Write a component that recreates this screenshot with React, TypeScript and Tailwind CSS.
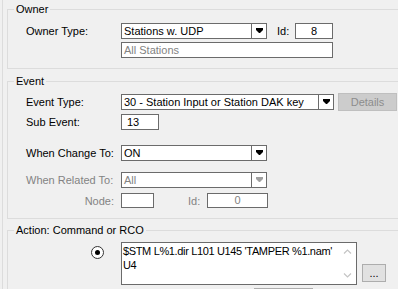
import React from "react";

const Arrow = ({ disabled }: { disabled?: boolean }) => (
  <svg width="7" height="6" viewBox="0 0 7 6">
    <path d="M0 0H7V2L4 5H3L0 2Z" fill={disabled ? "#a0a0a0" : "#000"} />
  </svg>
);

function Select({ value, className, disabled }: { value: string; className: string; disabled?: boolean }) {
  return (
    <div className={"flex h-[16px] border border-[#6b6b6b] bg-white " + className}>
      <div className={"flex-1 pl-[2px] leading-[14px] whitespace-nowrap overflow-hidden " + (disabled ? "text-[#838383]" : "text-black")}>
        {value}
      </div>
      <div className="w-[15px] border-l border-[#6b6b6b] flex items-center justify-center">
        <Arrow disabled={disabled} />
      </div>
    </div>
  );
}

function Group({ title, className, children }: { title: string; className: string; children?: React.ReactNode }) {
  return (
    <div className={"relative w-[420px] border border-r-0 border-[#dcdcdc] " + className}>
      <span className="absolute top-[-7px] left-[6px] bg-[#f0f0f0] px-[2px] leading-[13px]">{title}</span>
      {children}
    </div>
  );
}

const Chevron = ({ up }: { up?: boolean }) => (
  <svg width="9" height="5" viewBox="0 0 9 5">
    <polyline
      points={up ? "1,4.5 4.5,1 8,4.5" : "1,0.5 4.5,4 8,0.5"}
      fill="none"
      stroke="#c4c4c4"
      strokeWidth="1.2"
    />
  </svg>
);

export default function App() {
  return (
    <div
      className="w-[398px] h-[289px] overflow-hidden bg-[#f0f0f0] pl-[2px] text-[11px] text-black"
      style={{ fontFamily: '"Liberation Sans", Arial, sans-serif' }}
    >
      <div className="h-full border-l border-[#dcdcdc] pl-[4px] pt-[9px]">
        {/* Owner */}
        <Group title="Owner" className="h-[60px] pt-[13px]">
          <div className="flex flex-col gap-[3px]">
            <div className="flex items-center h-[16px]">
              <div className="w-[113px] pl-[18px] leading-[14px]">Owner Type:</div>
              <Select value="Stations w. UDP" className="w-[146px]" />
              <div className="ml-[10px] w-[18px] leading-[14px]">Id:</div>
              <div className="w-[38px] h-[16px] border border-[#6b6b6b] bg-white text-center leading-[14px]">8</div>
            </div>
            <div className="flex items-center h-[16px]">
              <div className="w-[113px]" />
              <div className="w-[212px] h-[16px] border border-[#6b6b6b] bg-white pl-[2px] leading-[14px] text-[#838383]">
                All Stations
              </div>
            </div>
          </div>
        </Group>

        {/* Event */}
        <Group title="Event" className="mt-[12px] h-[138px] pt-[11px]">
          <div className="flex items-center h-[18px]">
            <div className="w-[113px] pl-[18px] leading-[14px]">Event Type:</div>
            <Select value="30 - Station Input or Station DAK key" className="w-[213px]" />
            <div className="ml-[4px] w-[59px] h-[18px] bg-[#cccccc] border border-[#bfbfbf] text-[#8c8c8c] flex items-center justify-center leading-[14px]">
              Details
            </div>
          </div>
          <div className="flex items-center h-[16px] mt-[3px]">
            <div className="w-[113px] pl-[18px] leading-[14px]">Sub Event:</div>
            <div className="w-[38px] h-[16px] border border-[#6b6b6b] bg-white pl-[5px] leading-[14px]">13</div>
          </div>
          <div className="flex items-center h-[16px] mt-[15px]">
            <div className="w-[113px] pl-[18px] leading-[14px]">When Change To:</div>
            <Select value="ON" className="w-[146px]" />
          </div>
          <div className="flex items-center h-[16px] mt-[11px]">
            <div className="w-[113px] pl-[18px] leading-[14px] text-[#838383]">When Related To:</div>
            <Select value="All" className="w-[146px]" disabled />
          </div>
          <div className="flex items-center h-[15px] mt-[5px]">
            <div className="w-[113px] pr-[7px] text-right leading-[14px] text-[#838383]">Node:</div>
            <div className="w-[33px] h-[15px] border border-[#6b6b6b] bg-white" />
            <div className="ml-[34px] w-[19px] leading-[14px] text-[#838383]">Id:</div>
            <div className="w-[61px] h-[15px] border border-[#6b6b6b] bg-white text-center leading-[13px] text-[#838383]">0</div>
          </div>
        </Group>

        {/* Action */}
        <Group title="Action: Command or RCO" className="mt-[11px] h-[80px] pt-[11px]">
          <div className="flex">
            <div className="ml-[83px] mt-[4px] w-[13px] h-[13px] rounded-full border border-[#333333] bg-white flex items-center justify-center">
              <div className="w-[5px] h-[5px] rounded-full bg-black" />
            </div>
            <div className="ml-[17px] w-[236px] h-[43px] border border-[#6b6b6b] bg-white flex">
              <div className="flex-1 pl-[1px] pt-[1px] leading-[14px] tracking-[-0.35px] whitespace-nowrap">
                $STM L%1.dir L101 U145 'TAMPER %1.nam'
                <br />
                U4
              </div>
              <div className="w-[17px] shrink-0 flex flex-col items-center justify-between py-[6px]">
                <Chevron up />
                <Chevron />
              </div>
            </div>
            <div className="ml-[5px] mt-[22px] w-[24px] h-[18px] bg-[#e1e1e1] border border-[#adadad] flex items-center justify-center leading-[14px]">
              ...
            </div>
          </div>
          <div className="ml-[246px] mt-[3px] w-[59px] h-[18px] bg-[#e1e1e1] border border-[#adadad]" />
        </Group>
      </div>
    </div>
  );
}
